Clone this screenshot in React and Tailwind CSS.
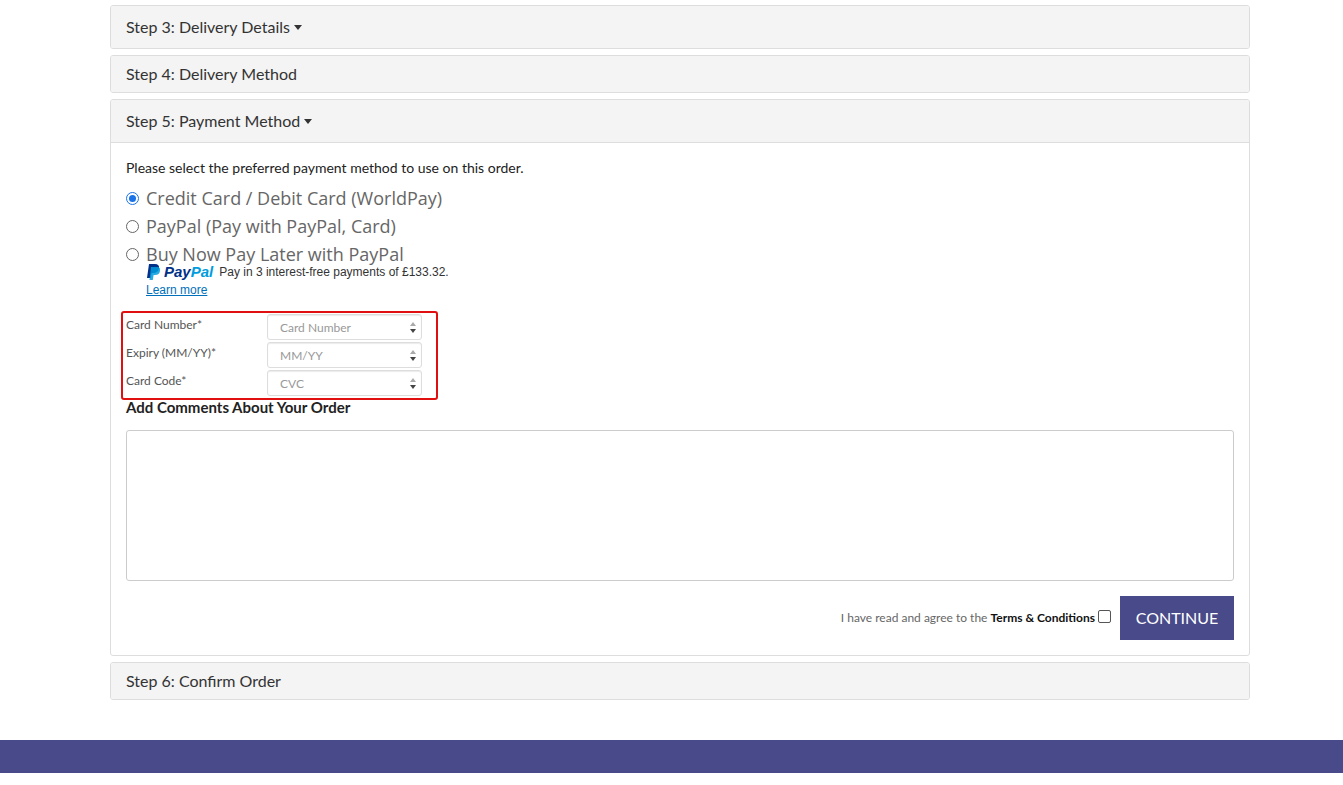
export default function App() {
  const Head = ({ children, caret, h = "h-[42px]" }) => (
    <div className={`${h} flex items-center px-[15px] bg-[#f4f4f4] text-[16px] text-[#333]`}>
      {children}
      {caret && <span className="ml-[4px] inline-block w-0 h-0 border-l-[4px] border-r-[4px] border-t-[5px] border-l-transparent border-r-transparent border-t-[#333]" />}
    </div>
  );
  const Spin = () => (
    <div className="absolute right-[2px] top-[2px] bottom-[2px] w-[12px] flex flex-col items-center justify-center gap-[3px] text-[#666]">
      <span className="w-0 h-0 border-l-[3px] border-r-[3px] border-b-[4px] border-l-transparent border-r-transparent border-b-[#aaa]" />
      <span className="w-0 h-0 border-l-[3px] border-r-[3px] border-t-[4px] border-l-transparent border-r-transparent border-t-[#444]" />
    </div>
  );
  const Field = ({ label, ph }) => (
    <div className="flex items-start h-[28px]">
      <div className="w-[141px] text-[12px] text-[#555] leading-[16px] pt-[3px]">{label}</div>
      <div className="relative w-[155px] h-[26px] border border-[#ddd] rounded-[3px] bg-white shadow-[inset_0_1px_1px_rgba(0,0,0,0.08)] flex items-center pl-[12px] pt-[2px] text-[12px] text-[#999]">
        {ph}
        <Spin />
      </div>
    </div>
  );
  const Radio = ({ checked, label }) => (
    <div className="flex items-center h-[28px] text-[18px] text-[#666]" style={{ fontFamily: '"Open Sans", sans-serif' }}>
      <span className={`w-[13px] h-[13px] rounded-full border mr-[7px] flex items-center justify-center ${checked ? "border-[#1a73e8]" : "border-[#666]"}`}>
        {checked && <span className="w-[7px] h-[7px] rounded-full bg-[#1a73e8]" />}
      </span>
      {label}
    </div>
  );
  return (
    <div className="bg-white min-h-[785px] flex flex-col" style={{ fontFamily: 'Lato, "Open Sans", sans-serif' }}>
      <div className="w-[1140px] ml-[110px] pt-[5px] flex flex-col gap-[6px]">
        <div className="border border-[#ddd] rounded-[3px] overflow-hidden"><Head caret>Step 3: Delivery Details</Head></div>
        <div className="border border-[#ddd] rounded-[3px] overflow-hidden"><Head h="h-[36px]">Step 4: Delivery Method</Head></div>
        <div className="border border-[#ddd] rounded-[3px] overflow-hidden">
          <div className="border-b border-[#ddd]"><Head caret>Step 5: Payment Method</Head></div>
          <div className="px-[15px] pt-[15px] pb-[15px]">
            <div className="text-[14px] leading-[20px] text-[#222] mb-[6px]">Please select the preferred payment method to use on this order.</div>
            <Radio checked label="Credit Card / Debit Card (WorldPay)" />
            <Radio label="PayPal (Pay with PayPal, Card)" />
            <Radio label="Buy Now Pay Later with PayPal" />
            <div className="pl-[20px] -mt-[6px]" style={{ fontFamily: '"Liberation Sans", Arial, sans-serif' }}>
              <div className="flex items-center gap-[6px] h-[20px]">
                <svg width="14" height="17" viewBox="0 0 14 17">
                  <path d="M3 0h6c3 0 4.5 1.6 4 4.3C12.4 7.6 10.3 9 7.3 9H5.6L4.7 14H1z" fill="#003087" />
                  <path d="M5 3h6c2.5 0 3.5 1.5 3 4-.5 3-2.5 4-5 4H7.6L6.8 16H3.5z" fill="#009cde" opacity="0.85" />
                </svg>
                <span className="text-[15px] font-bold italic text-[#003087] -ml-[2px]">Pay<span className="text-[#009cde]">Pal</span></span>
                <span className="text-[12px] text-[#333]">Pay in 3 interest-free payments of £133.32.</span>
              </div>
              <div className="text-[12px] leading-[16px] text-[#0070ba] underline">Learn more</div>
            </div>
            <div className="mt-[13px] -ml-[5px] w-[317px] h-[89px] border-2 border-[#e01010] rounded-[3px] pl-[3px] pt-[1px]">
              <Field label="Card Number*" ph="Card Number" />
              <Field label="Expiry (MM/YY)*" ph="MM/YY" />
              <Field label="Card Code*" ph="CVC" />
            </div>
            <div className="text-[15px] leading-[20px] font-bold text-[#222] -mt-[3px]">Add Comments About Your Order</div>
            <div className="mt-[13px] h-[151px] border border-[#ccc] rounded-[3px]" />
            <div className="mt-[15px] flex items-center justify-end">
              <span className="text-[12px] text-[#666]">I have read and agree to the <span className="text-[#111] font-bold">Terms &amp; Conditions</span></span>
              <span className="ml-[3px] -mt-[4px] w-[13px] h-[13px] border border-[#555] rounded-[2px] bg-white" />
              <div className="ml-[9px] w-[114px] h-[44px] bg-[#484a8a] text-white text-[16px] flex items-center justify-center">CONTINUE</div>
            </div>
          </div>
        </div>
        <div className="border border-[#ddd] rounded-[3px] overflow-hidden"><Head h="h-[36px]">Step 6: Confirm Order</Head></div>
      </div>
      <div className="mt-[40px] h-[33px] bg-[#484a8a]" />
    </div>
  );
}
